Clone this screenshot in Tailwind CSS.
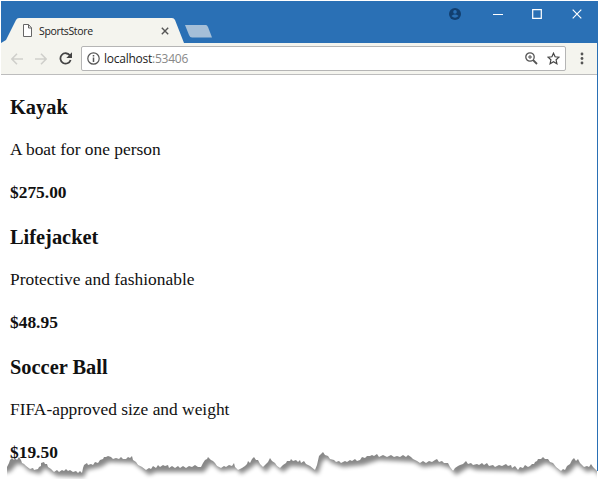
<!DOCTYPE html>
<html lang="en"><head><meta charset="utf-8"><title>SportsStore</title>
<script src="https://cdn.jsdelivr.net/npm/@tailwindcss/browser@4"></script></head>
<body class="bg-white overflow-hidden">
<div class="relative w-[600px] h-[479px] overflow-hidden pl-px pt-px">
<div class="w-[597px] h-[470px] border-r border-[#2a70b5] flex flex-col">
  <header class="h-[42px] shrink-0 bg-[#2a70b5] flex font-['Open_Sans',sans-serif]">
    <div class="relative w-[184px] h-[42px] shrink-0">
      <svg class="absolute inset-0" width="184" height="42"><path d="M0 42 5 39 15 19Q16 17 18 17H171Q173 17 174 19L183 42Z" fill="#f4f4ee"/></svg>
      <div class="relative flex items-center pt-[17px] pl-[22px] h-[42px]">
        <svg width="9" height="13" viewBox="0 0 9 13" fill="#fff" stroke="#666" stroke-width="1"><path d="M.5.5H5.5L8.5 3.8V12.5H.5ZM5.5.5V4H8.5"/></svg>
        <span class="ml-[7px] w-[122px] text-[10.5px] leading-[14px] text-[#222] tracking-[-0.35px]">SportsStore</span>
        <svg width="8" height="8" stroke="#555" stroke-width="1.4"><path d="M.8.8 7.2 7.2M7.2.8.8 7.2"/></svg>
      </div>
    </div>
    <svg class="-ml-px mt-[23px] shrink-0" width="28" height="15"><path d="M1 1H22Q23 1 24 3L28 13.500H8Q6 13.500 5 11Z" fill="#a5bfd8"/></svg>
    <div class="ml-auto mr-[15px] mt-[6px] h-[13px] flex items-center">
      <svg width="12" height="12" viewBox="0 0 12 12"><circle cx="6" cy="6" r="6" fill="#123f70"/><circle cx="6" cy="3.9" r="1.8" fill="#2a70b5"/><path d="M2.4 8Q6 5.2 9.6 8Q6 11.5 2.4 8Z" fill="#2a70b5"/></svg>
      <svg class="ml-[32px]" width="10" height="10" stroke="#fff"><path d="M0 5.5H10"/></svg>
      <svg class="ml-[29px]" width="10" height="10" fill="none" stroke="#fff" stroke-width="1.2"><path d="M.7.7H9.3V9.3H.7Z"/></svg>
      <svg class="ml-[30px]" width="10" height="10" stroke="#fff" stroke-width="1.2"><path d="M.7.7 9.3 9.3M9.3.7.7 9.3"/></svg>
    </div>
  </header>
  <nav class="h-[32px] shrink-0 bg-[#f4f4ee] border-b border-[#bdbdbd] flex items-center pl-[10px] font-['Open_Sans',sans-serif]">
    <svg width="12" height="12" fill="none" stroke="#cfcfcb" stroke-width="1.5"><path d="M12 6H1M6 .8.9 6 6 11.2"/></svg>
    <svg class="ml-[12px]" width="12" height="12" fill="none" stroke="#cfcfcb" stroke-width="1.5"><path d="M0 6H11M6 .8 11.1 6 6 11.2"/></svg>
    <svg class="ml-[12px]" width="13" height="13" viewBox="0 0 13 13"><path d="M10.8 3.3A5.2 5.2 0 1 0 11.6 8" fill="none" stroke="#444" stroke-width="1.8"/><path d="M13 .3V6H7.3Z" fill="#444"/></svg>
    <div class="ml-[9px] w-[485px] h-[25px] bg-white border border-[#b5b5b5] rounded-[2px] flex items-center pl-[5px] pr-[5px]">
      <svg width="13" height="13" viewBox="0 0 13 13"><circle cx="6.5" cy="6.5" r="5.7" fill="none" stroke="#555" stroke-width="1.2"/><path d="M6.5 5.5V10M6.5 3V4.5" stroke="#555" stroke-width="1.5"/></svg>
      <span class="ml-[4px] text-[12px] tracking-[-0.25px] leading-[16px] text-[#222]">localhost<span class="text-[#888]">:53406</span></span>
      <svg class="ml-auto" width="13" height="13" viewBox="0 0 13 13" fill="none" stroke="#555"><circle cx="5" cy="5" r="4.2" stroke-width="1.3"/><path d="M8 8 12 12" stroke-width="1.8"/><path d="M3 5H7M5 3V7"/></svg>
      <svg class="ml-[9px]" width="13" height="13" viewBox="0 0 13 13" fill="none" stroke="#444" stroke-width="1.2"><path d="M6.5 1.2 8.1 4.8 12 5.2 9.1 7.8 9.9 11.7 6.5 9.7 3.1 11.7 3.9 7.8 1 5.2 4.9 4.8Z"/></svg>
    </div>
    <svg class="ml-[14px]" width="4" height="13" fill="#555"><circle cx="2" cy="2" r="1.4"/><circle cx="2" cy="6.5" r="1.4"/><circle cx="2" cy="11" r="1.4"/></svg>
  </nav>
  <main class="pl-[9px] pt-[19px] font-['Liberation_Serif',serif] text-[17.4px] leading-[20px] text-[#111]">
    <section class="h-[130px]"><h3 class="text-[20.4px] leading-[26px] font-bold">Kayak</h3><p class="mt-[19px]">A boat for one person</p><h4 class="mt-[23px] font-bold">$275.00</h4></section>
    <section class="h-[130px]"><h3 class="text-[20.4px] leading-[26px] font-bold">Lifejacket</h3><p class="mt-[19px]">Protective and fashionable</p><h4 class="mt-[23px] font-bold">$48.95</h4></section>
    <section><h3 class="text-[20.4px] leading-[26px] font-bold">Soccer Ball</h3><p class="mt-[19px]">FIFA-approved size and weight</p><h4 class="mt-[23px] font-bold">$19.50</h4></section>
  </main>
</div>
<!-- torn paper edge with its shadow -->
<svg class="absolute left-0 top-0" width="600" height="479">
  <defs>
    <path id="tear" d="M7 467 9 463 10 460 12 458 14 460 15 458 17 460 19 457 21 460 22 463 24 464 26 466 30 469 33 468 34 470 38 469 39 467 41 466 41 463 44 462 45 464 47 464 48 467 51 469 54 472 57 470 59 472 62 470 64 471 66 469 68 471 70 470 73 472 76 471 78 473 80 471 82 473 83 468 84 465 87 463 88 465 91 464 93 465 95 462 98 463 100 460 103 459 104 457 106 457 108 456 111 457 113 459 116 458 119 459 121 457 123 459 126 459 128 457 130 458 132 456 133 460 136 462 138 465 142 467 146 470 149 468 151 469 153 466 156 468 158 465 160 467 163 465 165 466 168 465 169 468 172 466 175 468 178 466 180 468 183 466 186 468 189 466 192 467 195 465 198 467 201 467 203 463 205 460 207 459 208 457 211 460 213 461 215 463 217 466 221 468 224 466 226 467 229 465 232 466 234 463 235 467 238 470 242 468 245 466 247 464 248 461 250 463 252 459 254 457 256 460 258 460 260 464 263 467 266 464 268 462 270 458 272 461 275 463 277 466 280 468 283 465 286 463 287 461 290 461 291 459 293 461 296 460 298 462 300 460 301 463 304 461 306 464 310 466 315 470 317 465 319 456 321 454 323 452 325 455 328 456 330 459 334 460 336 462 339 461 341 463 345 461 347 462 350 460 352 461 355 459 357 461 360 460 362 457 365 458 367 456 370 456 372 455 374 456 377 454 379 457 383 455 387 457 391 455 394 457 397 456 400 457 403 455 406 457 408 455 411 457 413 459 417 461 420 463 423 461 426 463 429 461 432 462 435 460 437 459 439 462 442 461 444 463 448 463 450 467 453 471 455 468 458 466 460 465 463 464 466 461 468 464 471 463 473 465 477 464 479 465 482 463 484 465 487 463 489 466 493 465 495 467 499 465 502 466 506 464 508 466 511 465 512 468 515 466 518 470 520 467 523 468 525 465 528 467 530 466 532 464 534 464 535 462 537 461 538 459 541 459 543 457 545 459 548 459 550 462 553 463 556 467 561 471 563 469 565 470 567 466 570 464 572 460 574 458 576 461 578 459 580 463 582 465 584 467 587 466 589 467 591 464 593 467 595 469 597 471V500H7Z"/>
    <clipPath id="below"><use href="#tear"/></clipPath>
    <path id="cast" d="M-20 470 7 467 14 459 20 460 26 466 37 469 42 463 48 467 54 471 81 472 84 465 98 462 106 457 131 458 146 470 153 467 201 467 208 458 218 466 234 464 238 469 248 463 254 458 263 467 270 459 280 467 288 461 303 462 315 469 319 457 323 453 329 458 340 462 360 460 376 455 411 457 420 462 437 460 447 463 453 470 466 462 473 465 512 466 518 468 532 464 543 458 550 461 561 470 567 467 574 459 584 467 591 465 597 471H620V510H-20Z"/>
    <filter id="soft" filterUnits="userSpaceOnUse" x="-20" y="430" width="640" height="100"><feGaussianBlur stdDeviation="2"/></filter>
  </defs>
  <g clip-path="url(#below)"><path d="M0 440H600V479H0Z" fill="#888"/><use href="#cast" fill="#fff" transform="translate(3 5)" filter="url(#soft)"/></g>
</svg>
</div>
</body></html>
